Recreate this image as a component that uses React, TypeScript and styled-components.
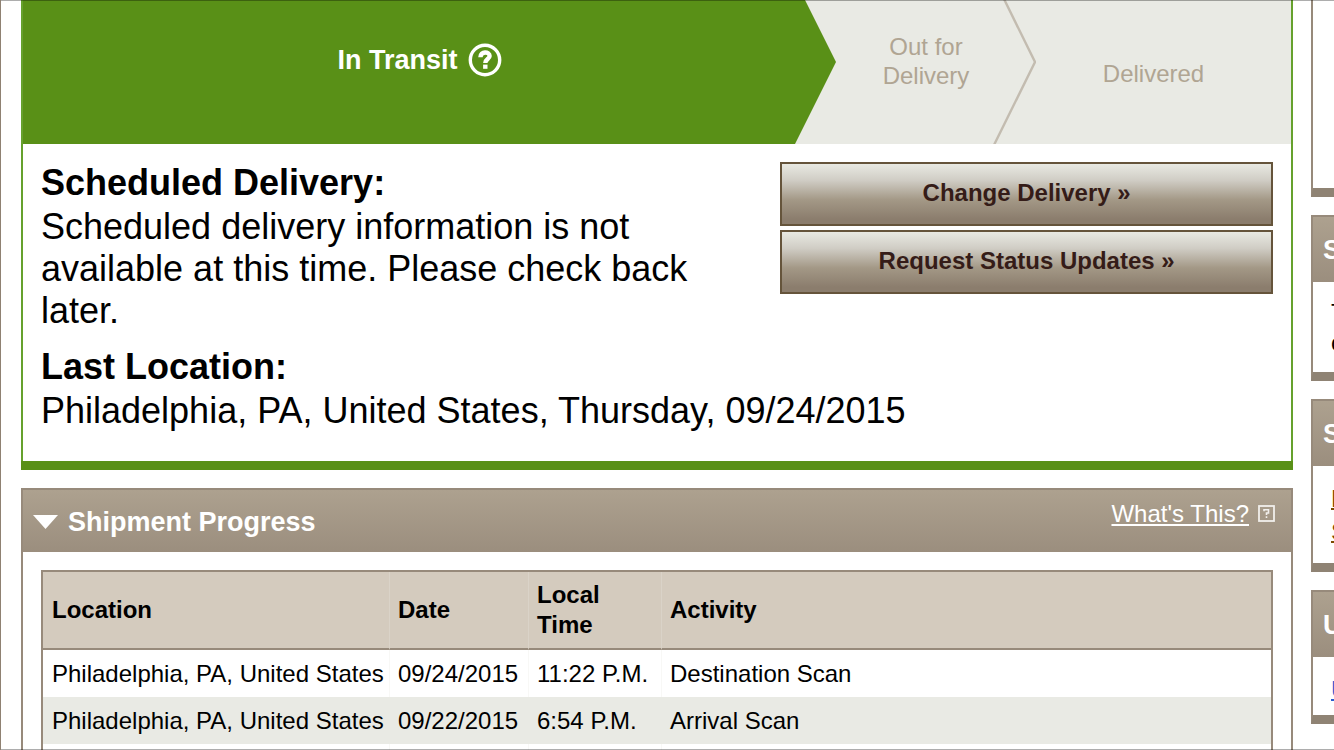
import React from "react";
import styled, { createGlobalStyle } from "styled-components";

const Global = createGlobalStyle`
  *, *::before, *::after { box-sizing: border-box; }
  body { margin: 0; background: #fff; color: #000; font-family: "Liberation Sans", Arial, sans-serif; font-size: 24px; line-height: 30px; }
  h2, h3, p { margin: 0; }
`;

const Page = styled.div`
  position: relative;
  height: 100vh;
  overflow: hidden;
  display: grid;
  grid-template-columns: minmax(0, 1fr) 23px;
  column-gap: 18px;
  padding-left: 20px;
  border-left: 1px solid #8f8172;
  &::after {
    content: "";
    position: absolute;
    inset: 0 0 0 -1px;
    border: solid rgba(0, 0, 0, 0.32);
    border-width: 1px 0;
    pointer-events: none;
  }
`;

const Column = styled.div`
  display: flex;
  flex-direction: column;
  gap: 18px;
`;

const StatusPanel = styled.section`
  border: solid #66a12d;
  border-width: 0 2px;
`;

const Steps = styled.div`
  display: grid;
  grid-template-columns: minmax(0, 813fr) minmax(0, 200fr) minmax(0, 255fr);
  height: 144px;
  background: #e9eae4;
`;

const Step = styled.div<{ $low?: boolean }>`
  position: relative;
  display: flex;
  align-items: center;
  justify-content: center;
  gap: 10px;
  padding: ${(p) => (p.$low ? "24px 20px 22px 0" : "0 20px 22px 0")};
  text-align: center;
  line-height: 29px;
  color: #b0a593;
`;

const CurrentStep = styled(Step)`
  background: #599017;
  color: #fff;
  font-size: 27px;
  font-weight: bold;
  padding-bottom: 24px;
  clip-path: polygon(0 0, calc(100% - 31px) 0, 100% 62px, calc(100% - 41px) 100%, 0 100%);
`;

const StepEdge = styled.svg`
  position: absolute;
  right: 0;
  top: 0;
`;

const IconButton = styled.button`
  display: flex;
  padding: 0;
  border: 0;
  background: none;
  color: inherit;
`;

const Details = styled.div`
  margin: 0 -2px;
  padding: 16px 20px 29px;
  border-bottom: 9px solid #599017;
  font-size: 36px;
  line-height: 42px;
  background: linear-gradient(#66a12d, #66a12d) left / 2px 100% no-repeat,
    linear-gradient(#66a12d, #66a12d) right / 2px 100% no-repeat;
`;

const Schedule = styled.div`
  display: grid;
  grid-template-columns: minmax(0, 1fr) 40%;
  column-gap: 20px;
  align-items: start;
  margin-bottom: 12px;
`;

const Label = styled.h3`
  font-size: 36px;
  line-height: 46px;
`;

const Actions = styled.div`
  display: flex;
  flex-direction: column;
  gap: 4px;
  padding-top: 2px;
`;

const ActionButton = styled.button`
  height: 64px;
  padding: 0 8px 2px;
  border: 2px solid #65543b;
  background: linear-gradient(#e8e9e2, #d0cdc5 27%, #a39886 60%, #8b7d6d 92%);
  color: #351c18;
  font: bold 24px "Liberation Sans", Arial, sans-serif;
`;

const Panel = styled.section`
  border: 2px solid #978a7b;
`;

const PanelHead = styled.header`
  display: flex;
  justify-content: space-between;
  height: 62px;
  padding: 0 16px 0 10px;
  background: linear-gradient(#ada18f, #9b8e7e);
  color: #fff;
`;

const PanelTitle = styled.h2`
  font-size: 27px;
  line-height: 64px;
`;

const Toggle = styled.button`
  display: flex;
  align-items: center;
  gap: 10px;
  padding: 0;
  border: 0;
  background: none;
  color: inherit;
  font: inherit;
`;

const HelpLink = styled.a`
  display: flex;
  align-items: center;
  gap: 9px;
  height: 47px;
  color: #fff;
  text-decoration: none;
  span { text-decoration: underline; text-decoration-thickness: 2px; text-underline-offset: 2px; }
`;

const TableWrap = styled.div`
  padding: 18px;
`;

const Table = styled.table`
  width: 100%;
  table-layout: fixed;
  border-spacing: 0;
  border: 2px solid #978a7b;
`;

const Col = styled.col<{ $width?: number }>`
  width: ${(p) => (p.$width ? `${p.$width}px` : "auto")};
`;

const Th = styled.th`
  height: 78px;
  padding: 0 30px 0 9px;
  background: #d4cbbe;
  border-bottom: 2px solid #978a7b;
  text-align: left;
  & + & { padding-left: 8px; border-left: 1px solid #dad3c8; }
`;

const Td = styled.td`
  height: 47px;
  padding: 0 0 0 9px;
  white-space: nowrap;
  tr:nth-child(even) & { background: #e9eae4; }
  & + & { padding-left: 8px; border-left: 1px solid #f8f8f6; }
  tr:nth-child(even) & + & { border-left-color: #e9eae4; }
`;

const SidePanel = styled.section<{ $body: number }>`
  width: 300px;
  border: 2px solid #978a7b;
  border-bottom: 9px solid #8f8374;
  &:first-child { border-top: 0; }
  & > div { height: ${(p) => p.$body}px; padding: 16px 18px; }
`;

const SideTitle = styled.h2`
  height: 65px;
  padding-left: 10px;
  background: linear-gradient(#ada18f, #9b8e7e);
  color: #fff;
  font-size: 27px;
  line-height: 66px;
`;

const SideLink = styled.a<{ $blue?: boolean }>`
  display: block;
  line-height: 33px;
  color: ${(p) => (p.$blue ? "#2a5bd0" : "#7d4a00")};
  text-decoration-thickness: 2px;
`;

const scans = [
  ["Philadelphia, PA, United States", "09/24/2015", "11:22 P.M.", "Destination Scan"],
  ["Philadelphia, PA, United States", "09/22/2015", "6:54 P.M.", "Arrival Scan"],
  ["", "", "", ""],
];

export default function App() {
  return (
    <Page>
      <Global />
      <Column as="main">
        <StatusPanel>
          <Steps>
            <CurrentStep>
              In Transit
              <IconButton aria-label="Help">
                <svg width="34" height="34" viewBox="0 0 34 34" fill="none" stroke="currentColor">
                  <circle cx="17" cy="17" r="14.7" strokeWidth="3.4" />
                  <path d="M12.4 14.2C12.4 8 21.6 8.2 21.6 13C21.6 16 17.3 16.2 17.3 20" strokeWidth="4.4" />
                  <path d="M17.3 21.6v4.2" strokeWidth="4.4" />
                </svg>
              </IconButton>
            </CurrentStep>
            <Step>
              Out for
              <br />
              Delivery
              <StepEdge width="44" height="144" viewBox="0 0 44 144" fill="none" stroke="#c3bcb0" strokeWidth="2.4">
                <path d="M12 -1L43 62L2 145" />
              </StepEdge>
            </Step>
            <Step $low>Delivered</Step>
          </Steps>
          <Details>
            <Schedule>
              <div>
                <Label>Scheduled Delivery:</Label>
                <p>Scheduled delivery information is not available at this time. Please check back later.</p>
              </div>
              <Actions>
                <ActionButton>Change Delivery »</ActionButton>
                <ActionButton>Request Status Updates »</ActionButton>
              </Actions>
            </Schedule>
            <Label>Last Location:</Label>
            <p>Philadelphia, PA, United States, Thursday, 09/24/2015</p>
          </Details>
        </StatusPanel>
        <Panel>
          <PanelHead>
            <PanelTitle>
              <Toggle aria-expanded="true">
                <svg width="25" height="14" viewBox="0 0 25 14">
                  <path d="M0 0H25L12.5 14Z" fill="#fff" />
                </svg>
                Shipment Progress
              </Toggle>
            </PanelTitle>
            <HelpLink href="#help">
              <span>What's This?</span>
              <svg width="17" height="17" viewBox="0 0 17 17" fill="none" stroke="#f1efec">
                <rect x="1" y="1" width="15" height="15" strokeWidth="1.8" />
                <path d="M6 6.3V4.8H10.5V8H8.5V10M8.5 11.3V13" strokeWidth="1.6" />
              </svg>
            </HelpLink>
          </PanelHead>
          <TableWrap>
            <Table>
              <colgroup>
                <Col $width={346} />
                <Col $width={139} />
                <Col $width={133} />
                <Col />
              </colgroup>
              <thead>
                <tr>
                  <Th>Location</Th>
                  <Th>Date</Th>
                  <Th>Local Time</Th>
                  <Th>Activity</Th>
                </tr>
              </thead>
              <tbody>
                {scans.map((row, i) => (
                  <tr key={i}>
                    {row.map((cell, j) => (
                      <Td key={j}>{cell}</Td>
                    ))}
                  </tr>
                ))}
              </tbody>
            </Table>
          </TableWrap>
        </Panel>
      </Column>
      <Column as="aside">
        <SidePanel $body={188}>
          <div />
        </SidePanel>
        <SidePanel $body={90}>
          <SideTitle>S</SideTitle>
          <div>
            T<br />o
          </div>
        </SidePanel>
        <SidePanel $body={97}>
          <SideTitle>S</SideTitle>
          <div>
            <SideLink href="#first">R</SideLink>
            <SideLink href="#second">S</SideLink>
          </div>
        </SidePanel>
        <SidePanel $body={58}>
          <SideTitle>U</SideTitle>
          <div>
            <SideLink $blue href="#third">U</SideLink>
          </div>
        </SidePanel>
      </Column>
    </Page>
  );
}
